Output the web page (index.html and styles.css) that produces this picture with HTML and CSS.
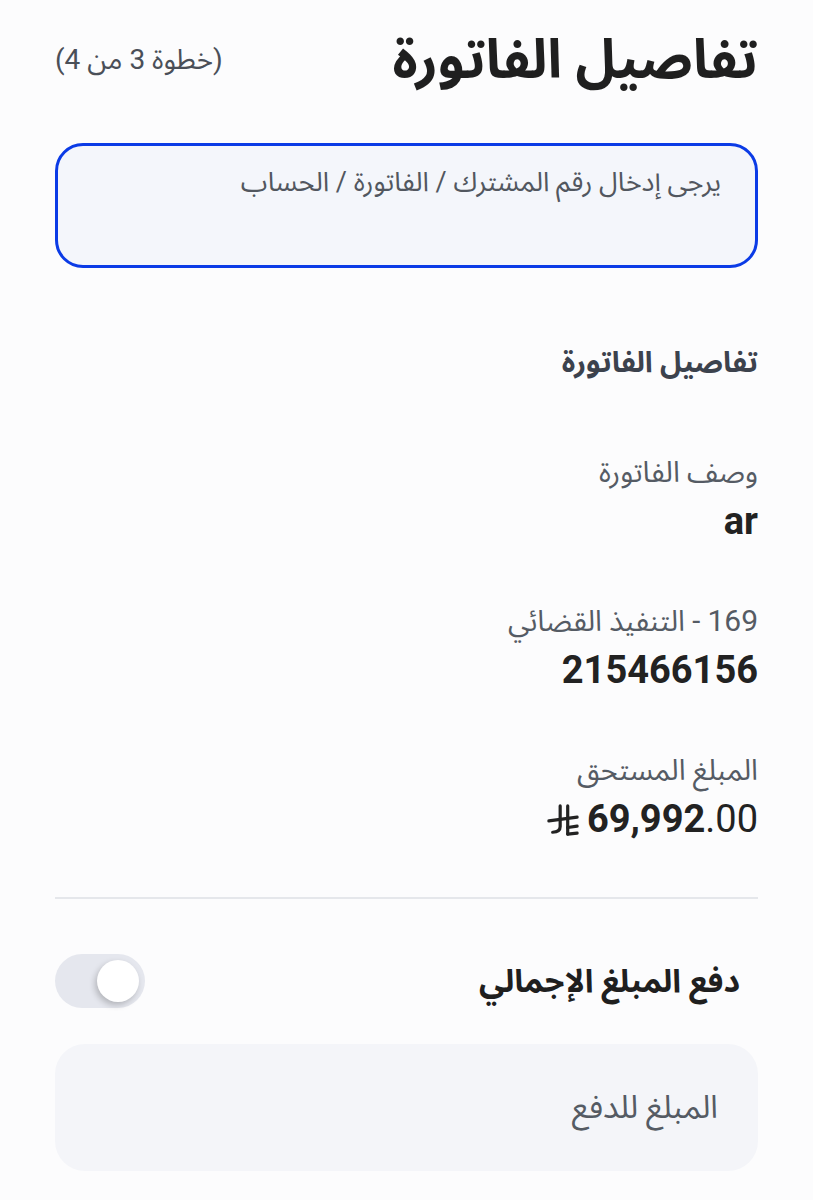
FILE: index.html
```html
<!DOCTYPE html>
<html lang="ar" dir="rtl">
<head>
<meta charset="utf-8">
<link rel="stylesheet" href="styles.css">
</head>
<body>
<main class="page">
  <header class="head">
    <h1 class="title">تفاصيل الفاتورة</h1>
    <span class="step">(خطوة 3 من 4)</span>
  </header>

  <div class="input-box">
    <span class="placeholder">يرجى إدخال رقم المشترك / الفاتورة / الحساب</span>
  </div>

  <h2 class="section">تفاصيل الفاتورة</h2>

  <div class="field">
    <div class="label">وصف الفاتورة</div>
    <div class="value">ar</div>
  </div>

  <div class="field">
    <div class="label"><span class="lat">169</span> - التنفيذ القضائي</div>
    <div class="value">215466156</div>
  </div>

  <div class="field">
    <div class="label">المبلغ المستحق</div>
    <div class="value amount"><span class="num">69,992<span class="dec">.00</span></span>
      <svg class="riyal" viewBox="0 0 34 34" width="32" height="32" aria-hidden="true">
        <path d="M14 2 V24 Q14 30 6 30" fill="none" stroke="#222" stroke-width="3.4" stroke-linecap="round"/>
        <path d="M22 2 V32" fill="none" stroke="#222" stroke-width="3.4" stroke-linecap="round"/>
        <path d="M2 18 L32 14" fill="none" stroke="#222" stroke-width="3.4" stroke-linecap="round"/>
        <path d="M22 25 L32 23.5" fill="none" stroke="#222" stroke-width="3.4" stroke-linecap="round"/>
        <path d="M22 32 L32 31" fill="none" stroke="#222" stroke-width="3.4" stroke-linecap="round"/>
      </svg>
    </div>
  </div>

  <hr class="divider">

  <div class="toggle-row">
    <span class="toggle-label">دفع المبلغ الإجمالي</span>
    <span class="toggle"><span class="knob"></span></span>
  </div>

  <div class="amount-box">
    <span class="placeholder2">المبلغ للدفع</span>
  </div>
</main>
</body>
</html>
```

FILE: styles.css
```css
* { box-sizing: border-box; }
html, body {
  margin: 0;
  padding: 0;
  background: #fcfcfd;
}
body {
  font-family: Roboto, "Noto Sans Arabic", "DejaVu Sans", sans-serif;
  color: #222;
}
.page {
  padding: 20px 55px 40px 55px;
}
.head {
  display: flex;
  align-items: center;
  justify-content: space-between;
  height: 80px;
}
.title {
  margin: 0;
  font-size: 54px;
  font-weight: 700;
  color: #1f1f1f;
  line-height: 80px;
}
.step {
  font-size: 28px;
  color: #4a4f58;
  line-height: 36px;
  margin-top: 0;
}
.input-box {
  margin-top: 43px;
  height: 125px;
  border: 3px solid #0b3be6;
  border-radius: 28px;
  background: #f4f6fb;
  padding: 16px 34px 0 34px;
}
.placeholder {
  display: block;
  font-size: 27px;
  line-height: 40px;
  color: #52575f;
}
.section {
  margin: 74px 0 0 0;
  font-size: 29px;
  font-weight: 700;
  color: #3c424d;
  line-height: 40px;
}
.field {
  margin-top: 72px;
}
.field + .field {
  margin-top: 60px;
}
.label {
  font-size: 29px;
  color: #555b64;
  line-height: 36px;
}
.lat {
  font-size: 30px;
}
.value {
  margin-top: 9px;
  font-size: 38px;
  font-weight: 700;
  color: #222;
  line-height: 44px;
}
.amount {
  display: flex;
  align-items: center;
  gap: 8px;
}
.num {
  direction: ltr;
  unicode-bidi: isolate;
}
.dec {
  font-weight: 400;
}
.riyal {
  display: block;
  margin-top: 2px;
}
.divider {
  margin: 56px 0 0 0;
  border: 0;
  height: 2px;
  background: #e5e7eb;
}
.toggle-row {
  margin-top: 55px;
  height: 54px;
  display: flex;
  align-items: center;
  justify-content: space-between;
  padding-right: 18px;
}
.toggle-label {
  font-size: 32px;
  line-height: 40px;
  font-weight: 700;
  color: #1f1f1f;
}
.toggle {
  position: relative;
  width: 90px;
  height: 54px;
  border-radius: 27px;
  background: #e5e7ee;
  display: block;
}
.knob {
  position: absolute;
  left: 42px;
  top: 6px;
  width: 42px;
  height: 42px;
  border-radius: 50%;
  background: #fff;
  box-shadow: -2px 3px 6px rgba(0,0,0,0.22);
}
.amount-box {
  margin-top: 36px;
  height: 127px;
  border-radius: 30px;
  background: #f4f5f9;
  display: flex;
  align-items: center;
  padding: 0 40px;
}
.placeholder2 {
  font-size: 32px;
  color: #555b64;
}
```
